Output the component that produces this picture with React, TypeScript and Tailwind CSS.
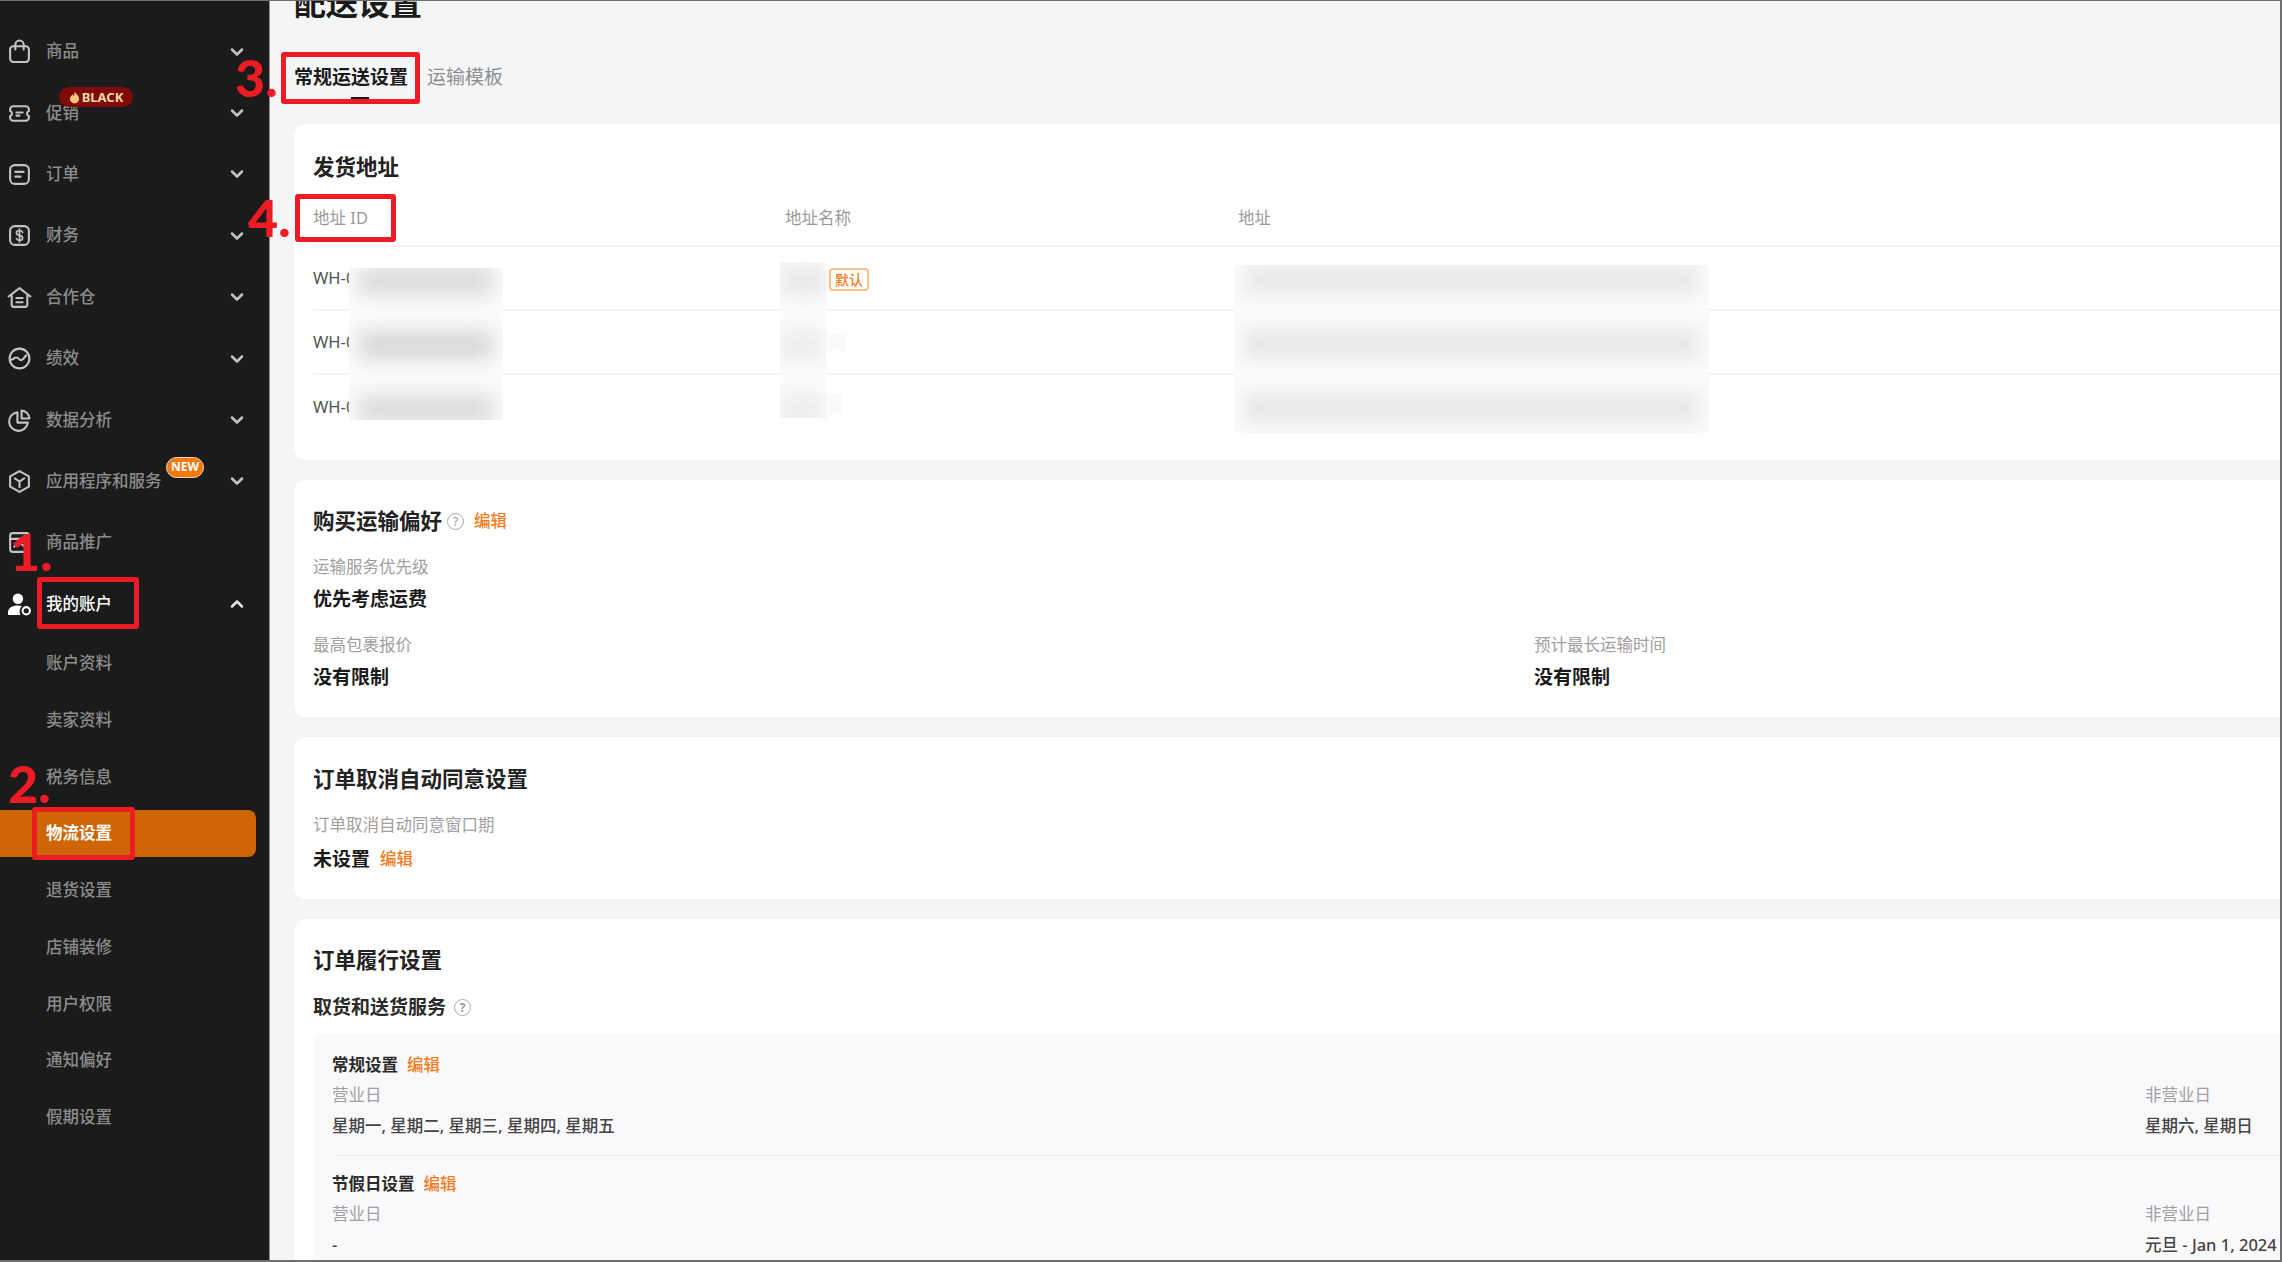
import type { ReactNode } from "react";
import { ChevronDown, ChevronUp } from "lucide-react";

const icons: Record<string, ReactNode> = {
  bag: (
    <>
      <rect x="3" y="7" width="18" height="15" rx="3" />
      <path d="M8 10V5.500a4 4 0 0 1 8 0V10" />
    </>
  ),
  ticket: (
    <>
      <path d="M3 8a3 3 0 0 1 3-3h12a3 3 0 0 1 3 3v1.600a2.500 2.500 0 0 0 0 4.800V16a3 3 0 0 1-3 3H6a3 3 0 0 1-3-3v-1.600a2.500 2.500 0 0 0 0-4.800Z" />
      <path d="M9 11h6M9 14h3" />
    </>
  ),
  order: (
    <>
      <rect x="3" y="3" width="18" height="18" rx="4.500" />
      <path d="M8 9.500h8M8 14h5" />
    </>
  ),
  money: (
    <>
      <rect x="3" y="3" width="18" height="18" rx="4.500" />
      <path d="M15 9c-.5-1.200-1.600-1.800-3-1.800-1.700 0-3 .8-3 2.300 0 3.200 6 1.600 6 4.900 0 1.500-1.300 2.300-3 2.300-1.400 0-2.500-.6-3-1.800M12 5.800v12.400" strokeWidth="1.600" />
    </>
  ),
  house: (
    <>
      <path d="M1.500 11 12 3l10.500 8M4.500 9.500V19a2 2 0 0 0 2 2h11a2 2 0 0 0 2-2V9.500" />
      <path d="M9 12.500h6M9 16.500h6" />
    </>
  ),
  trend: (
    <>
      <circle cx="12" cy="12" r="9.500" />
      <path d="M3.500 13.500c2.500-.5 3.500-2.500 5.500-2.500 2.500 0 2.500 3 5 2.500 2-.4 3-3.500 4.500-4.500" />
    </>
  ),
  pie: (
    <>
      <path d="M10 4a9 9 0 1 0 10 10H10Z" />
      <path d="M14 2.500A8 8 0 0 1 21.500 10H14Z" />
    </>
  ),
  box: (
    <>
      <path d="M12 2 21 7v10l-9 5-9-5V7Z" />
      <path d="m7.500 9 4.500 3 4.500-3M12 12v5.500" />
    </>
  ),
  promo: (
    <>
      <rect x="3" y="3" width="18" height="18" rx="2.500" />
      <path d="M3 8.500h18M7 16l5-4 5 4" />
    </>
  ),
};

function NavIcon({ name }: { name: string }) {
  return (
    <svg viewBox="0 0 24 24" fill="none" stroke="#c4c4c4" strokeWidth="2" strokeLinecap="round" strokeLinejoin="round" className="w-[25px] h-[25px] shrink-0">
      {icons[name]}
    </svg>
  );
}

function Help() {
  return (
    <span className="w-[17px] h-[17px] rounded-full border border-[#a8a8a8] text-[#999999] text-[12px] leading-[15px] text-center shrink-0">?</span>
  );
}

function Edit() {
  return <span className="text-[16.500px] font-medium text-[#f57c1c]">编辑</span>;
}

const mainNav = [
  { label: "商品", icon: "bag" },
  { label: "促销", icon: "ticket" },
  { label: "订单", icon: "order" },
  { label: "财务", icon: "money" },
  { label: "合作仓", icon: "house" },
  { label: "绩效", icon: "trend" },
  { label: "数据分析", icon: "pie" },
  { label: "应用程序和服务", icon: "box" },
];

const subNav = ["账户资料", "卖家资料", "税务信息", "物流设置", "退货设置", "店铺装修", "用户权限", "通知偏好", "假期设置"];

function Sidebar() {
  return (
    <aside className="w-[270px] shrink-0 bg-[#1b1b1b] pt-[21px] border-r border-[#8a8a8a]">
      {mainNav.map((item) => (
        <div key={item.label} className="relative h-[61.400px] flex items-center pl-[7px] pr-[22px] gap-[14px] text-[16.500px] font-medium text-[#8c8c8c]">
          <NavIcon name={item.icon} />
          <span className="flex-1">{item.label}</span>
          <ChevronDown className="w-[20px] h-[20px] text-[#c4c4c4]" strokeWidth={3} />
          {item.label === "促销" && (
            <span className="absolute left-[59px] top-[5px] h-[20px] w-[74px] rounded-full bg-[#7f0a0a] flex items-center justify-center gap-[2px] text-[13px] font-bold text-[#f6d9a0]">
              <svg viewBox="0 0 12 14" className="w-[11px] h-[13px]" fill="#f5c77e">
                <path d="M6 0c.5 2.500 5 4.500 5 8.500A5 5 0 0 1 1 8.500C1 6 3 5.500 3.500 3.500 4.500 4 5 5 5 5.500 6 4 6.200 2 6 0Z" />
              </svg>
              BLACK
            </span>
          )}
          {item.label === "应用程序和服务" && (
            <span className="absolute left-[166px] top-[6px] h-[21px] w-[38px] rounded-full bg-[#f07a10] border border-[#f3d9b8] flex items-center justify-center text-[12px] font-bold text-white">
              NEW
            </span>
          )}
        </div>
      ))}
      <div className="h-[61.400px] flex items-center pl-[7px] pr-[22px] gap-[14px] text-[16.500px] font-medium text-[#8c8c8c]">
        <NavIcon name="promo" />
        <span className="flex-1">商品推广</span>
      </div>
      <div className="h-[61.400px] flex items-center pl-[7px] pr-[22px] gap-[14px] text-[16.500px] font-medium text-white">
        <svg viewBox="0 0 24 24" className="w-[25px] h-[25px] shrink-0" fill="#ffffff">
          <circle cx="10.500" cy="6.500" r="5" />
          <path d="M1 22v-2.500C1 15.500 5 13 10.500 13c1.500 0 2.800.2 4 .5A6.500 6.500 0 0 0 13 22Z" />
          <circle cx="18.500" cy="18" r="3.500" fill="none" stroke="#ffffff" strokeWidth="2" />
        </svg>
        <span className="flex-1">我的账户</span>
        <ChevronUp className="w-[20px] h-[20px] text-[#e5e5e5]" strokeWidth={3} />
      </div>
      {subNav.map((label) =>
        label === "物流设置" ? (
          <div key={label} className="h-[47px] my-[4.900px] w-[256px] rounded-r-[8px] bg-[#cf6605] flex items-center pl-[46px] text-[16.500px] font-bold text-white">
            {label}
          </div>
        ) : (
          <div key={label} className="h-[56.800px] flex items-center pl-[46px] text-[16.500px] font-medium text-[#8c8c8c]">
            {label}
          </div>
        ),
      )}
    </aside>
  );
}

function AddressRow({ last }: { last?: boolean }) {
  return (
    <div className={`h-[64px] flex items-center text-[16.500px] text-[#555555] ${last ? "" : "border-b-2 border-[#f3f3f3]"}`}>
      WH-0
    </div>
  );
}

function Card({ className, children }: { className: string; children: ReactNode }) {
  return <section className={`bg-white rounded-l-[12px] pl-[19px] ${className}`}>{children}</section>;
}

function Label({ children, className = "" }: { children: ReactNode; className?: string }) {
  return <div className={`h-[24px] leading-[24px] text-[16.500px] text-[#a0a0a0] ${className}`}>{children}</div>;
}

function Value({ children, className = "" }: { children: ReactNode; className?: string }) {
  return <div className={`h-[26px] leading-[26px] text-[19px] font-bold text-[#1a1a1a] ${className}`}>{children}</div>;
}

function Heading({ children }: { children: ReactNode }) {
  return <h3 className="h-[30px] leading-[30px] text-[21.500px] font-bold text-[#222222]">{children}</h3>;
}

function DayBlock({ title, days, off }: { title: string; days: string; off: string }) {
  return (
    <>
      <div className="h-[24px] flex items-center gap-[9px] text-[16.500px] font-bold text-[#2a2a2a]">
        {title}
        <Edit />
      </div>
      <div className="mt-[7px] flex h-[22px] leading-[22px] text-[16.500px] text-[#a0a0a0]">
        <span className="w-[1813px] shrink-0">营业日</span>
        <span>非营业日</span>
      </div>
      <div className="mt-[9px] flex h-[22px] leading-[22px] text-[16.500px] font-medium text-[#444444] whitespace-nowrap">
        <span className="w-[1813px] shrink-0">{days}</span>
        <span>{off}</span>
      </div>
    </>
  );
}

function Blurred({ className, rows }: { className: string; rows: string[] }) {
  return (
    <div className={`absolute bg-[#fbfbfb] overflow-hidden flex flex-col gap-[38px] px-[10px] ${className}`}>
      {rows.map((r, i) => (
        <div key={i} className={`h-[26px] shrink-0 blur-[10px] ${r}`} />
      ))}
    </div>
  );
}

function Annotation({ className }: { className: string }) {
  return <div className={`absolute border-[5px] border-[#ed1c24] rounded-[3px] ${className}`} />;
}

function Num({ className, children }: { className: string; children: string }) {
  return (
    <div className={`absolute text-[52px] leading-[52px] font-black text-[#ed1c24] font-['Lato',sans-serif] ${className}`}>
      {children}
    </div>
  );
}

export default function App() {
  return (
    <div className="relative w-[2282px] h-[1262px] overflow-hidden flex bg-[#f4f5f7] font-['Noto_Sans','Noto_Sans_CJK_SC',sans-serif]">
      <Sidebar />

      <main className="flex-1 min-w-0 pl-[24px]">
        <h1 className="-mt-[17px] h-[40px] leading-[40px] text-[32px] font-bold text-[#1a1a1a]">配送设置</h1>

        <div className="mt-[41px] flex gap-[19px] text-[19px] h-[26px] leading-[26px]">
          <span className="relative font-bold text-[#1a1a1a]">
            常规运送设置
            <span className="absolute left-[57px] top-[33px] w-[18px] h-[3px] bg-[#1a1a1a]" />
          </span>
          <span className="text-[#8f8f8f]">运输模板</span>
        </div>

        <div className="mt-[34px] flex flex-col gap-[20px]">
          <Card className="h-[336px] pt-[28px]">
            <Heading>发货地址</Heading>
            <div className="mt-[9px] h-[56px] flex items-center text-[16.500px] text-[#9a9a9a] border-b-2 border-[#f3f3f3]">
              <span className="w-[472px]">地址 ID</span>
              <span className="w-[453px]">地址名称</span>
              <span>地址</span>
            </div>
            <AddressRow />
            <AddressRow />
            <AddressRow last />
          </Card>

          <Card className="h-[237px] pt-[26px]">
            <div className="flex items-center gap-[5px]">
              <Heading>购买运输偏好</Heading>
              <Help />
              <span className="ml-[5px]"><Edit /></span>
            </div>
            <Label className="mt-[19px]">运输服务优先级</Label>
            <Value className="mt-[7px]">优先考虑运费</Value>
            <div className="mt-[21px] flex">
              <div className="w-[1221px]">
                <Label>最高包裹报价</Label>
                <Value className="mt-[7px]">没有限制</Value>
              </div>
              <div>
                <Label>预计最长运输时间</Label>
                <Value className="mt-[7px]">没有限制</Value>
              </div>
            </div>
          </Card>

          <Card className="h-[162px] pt-[27px]">
            <Heading>订单取消自动同意设置</Heading>
            <Label className="mt-[19px]">订单取消自动同意窗口期</Label>
            <div className="mt-[9px] flex items-center gap-[10px]">
              <Value>未设置</Value>
              <Edit />
            </div>
          </Card>

          <Card className="h-[400px] pt-[26px]">
            <Heading>订单履行设置</Heading>
            <div className="mt-[19px] h-[26px] flex items-center gap-[8px] text-[19px] font-bold text-[#2a2a2a]">
              取货和送货服务
              <Help />
            </div>
            <div className="mt-[14px] bg-[#f9f9fb] rounded-l-[8px] pl-[19px] pt-[19px] h-[300px]">
              <DayBlock title="常规设置" days="星期一, 星期二, 星期三, 星期四, 星期五" off="星期六, 星期日" />
              <div className="mt-[18px] mb-[16px] h-px bg-[#eeeeee]" />
              <DayBlock title="节假日设置" days="-" off="元旦 - Jan 1, 2024" />
            </div>
          </Card>
        </div>
      </main>

      {/* blurred-out address data */}
      <Blurred className="left-[349px] top-[268px] w-[154px] h-[152px] !pt-0" rows={["bg-[#d8d8d8]", "bg-[#d4d4d4]", "bg-[#d8d8d8]"]} />
      <Blurred className="left-[780px] top-[262px] w-[46px] h-[156px] pt-[6px] !px-0" rows={["bg-[#e6e6e6]", "bg-[#ebebeb]", "bg-[#ebebeb]"]} />
      <div className="absolute left-[826px] top-[334px] w-[20px] h-[17px] bg-[#fafafa]" />
      <div className="absolute left-[826px] top-[394px] w-[16px] h-[21px] bg-[#fafafa]" />
      <Blurred className="left-[1234px] top-[265px] w-[475px] h-[168px] pt-[2px]" rows={["bg-[#e6e6e6]", "bg-[#e4e4e4]", "bg-[#e4e4e4]"]} />

      <div className="absolute left-[829px] top-[268px] w-[40px] h-[23px] rounded-[4px] border-2 border-[#fbc08f] flex items-center justify-center text-[14px] font-medium text-[#f57c1c]">
        默认
      </div>

      {/* tutorial markers */}
      <Annotation className="left-[37px] top-[577px] w-[102px] h-[52px]" />
      <Annotation className="left-[32px] top-[807px] w-[103px] h-[53px]" />
      <Annotation className="left-[281px] top-[52px] w-[139px] h-[52px]" />
      <Annotation className="left-[295px] top-[194px] w-[101px] h-[48px]" />
      <Num className="left-[10px] top-[525px]">1.</Num>
      <Num className="left-[8px] top-[757px]">2.</Num>
      <Num className="left-[235px] top-[51px]">3.</Num>
      <Num className="left-[248px] top-[191px]">4.</Num>

      {/* window edge of the screenshot */}
      <div className="absolute inset-0 border-t border-r-2 border-b-2 border-[#6f6f6f] pointer-events-none" />
    </div>
  );
}
